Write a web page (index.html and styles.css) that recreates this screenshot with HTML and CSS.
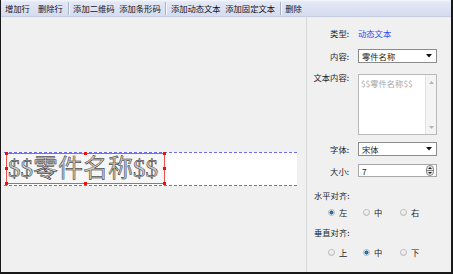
FILE: index.html
```html
<!DOCTYPE html>
<html>
<head>
<meta charset="utf-8">
<title>标签设计</title>
<link rel="stylesheet" href="styles.css">
</head>
<body>
<div class="app">
   <!-- Toolbar -->
   <div class="toolbar">
      <span class="tool first">增加行</span>
      <span class="tool">删除行</span>
      <span class="sep"></span>
      <span class="tool">添加二维码</span>
      <span class="tool">添加条形码</span>
      <span class="sep"></span>
      <span class="tool">添加动态文本</span>
      <span class="tool">添加固定文本</span>
      <span class="sep"></span>
      <span class="tool">删除</span>
   </div>

   <div class="main">
      <!-- Design canvas -->
      <div class="canvas">
         <div class="label-row">
            <div class="field">
               <span class="field-text">$$零件名称$$</span>
               <i class="h h-tl"></i><i class="h h-tm"></i><i class="h h-tr"></i>
               <i class="h h-ml"></i><i class="h h-mr"></i>
               <i class="h h-bl"></i><i class="h h-bm"></i><i class="h h-br"></i>
            </div>
         </div>
      </div>

      <!-- Property panel -->
      <div class="panel">
         <div class="row">
            <span class="lbl">类型:</span>
            <span class="link">动态文本</span>
         </div>
         <div class="row r-content">
            <span class="lbl">内容:</span>
            <div class="select">
               <span>零件名称</span>
               <svg class="arrow" width="6" height="4" viewBox="0 0 6 4"><path d="M0 0 H6 L3 3.5 Z" fill="#111"/></svg>
            </div>
         </div>
         <div class="row r-text">
            <span class="lbl lbl-top">文本内容:</span>
            <div class="textarea">
               <span class="ph">$$零件名称$$</span>
               <div class="sbar">
                  <svg width="5" height="3" viewBox="0 0 5 3"><path d="M0 3 L2.5 0 L5 3 Z" fill="#b4b4b4"/></svg>
                  <svg width="5" height="3" viewBox="0 0 5 3"><path d="M0 0 L2.5 3 L5 0 Z" fill="#b4b4b4"/></svg>
               </div>
            </div>
         </div>
         <div class="row r-font">
            <span class="lbl">字体:</span>
            <div class="select">
               <span>宋体</span>
               <svg class="arrow" width="6" height="4" viewBox="0 0 6 4"><path d="M0 0 H6 L3 3.5 Z" fill="#111"/></svg>
            </div>
         </div>
         <div class="row r-size">
            <span class="lbl">大小:</span>
            <div class="spin">
               <span>7</span>
               <svg class="spin-btn" width="8" height="11" viewBox="0 0 8 11">
                  <rect x="0.5" y="0.5" width="7" height="10" rx="3.5" fill="#e4e4e4" stroke="#8a8a8a"/>
                  <line x1="1" y1="5.5" x2="7" y2="5.5" stroke="#8a8a8a"/>
                  <path d="M2 4 L4 2 L6 4 Z" fill="#222"/>
                  <path d="M2 7 L4 9 L6 7 Z" fill="#222"/>
               </svg>
            </div>
         </div>

         <div class="section">水平对齐:</div>
         <div class="radios">
            <span class="radio"><i class="dot on"></i>左</span>
            <span class="radio"><i class="dot"></i>中</span>
            <span class="radio"><i class="dot"></i>右</span>
         </div>
         <div class="section s-v">垂直对齐:</div>
         <div class="radios">
            <span class="radio"><i class="dot"></i>上</span>
            <span class="radio"><i class="dot on"></i>中</span>
            <span class="radio"><i class="dot"></i>下</span>
         </div>
      </div>
   </div>
</div>
</body>
</html>
```

FILE: styles.css
```css
html,
body {
   margin: 0;
   padding: 0;
   background: #fff;
   font-family: "Noto Sans CJK SC", "DejaVu Sans", sans-serif;
   font-size: 8.3px;
   color: #1e1e1e;
}

.app {
   width: 453px;
   height: 274px;
   box-sizing: border-box;
   border-left: 1px solid #1a1a1a;
   border-right: 2px solid #1a1a1a;
   border-bottom: 2px solid #1a1a1a;
   display: flex;
   flex-direction: column;
   background: #f0f0f0;
}

/* toolbar */
.toolbar {
   height: 16px;
   display: flex;
   align-items: center;
   gap: 4.6px;
   padding-left: 4px;
   background: linear-gradient(#f6f8fc 0, #e3e8f5 2px, #d4dcef 100%);
   border-bottom: 1px solid #c6cde0;
}

.tool {
   line-height: 16px;
   white-space: nowrap;
   color: #14141e;
}

.tool.first {
   margin-right: 3.5px;
}

.sep {
   width: 1px;
   height: 13px;
   background: #aab3c8;
   box-shadow: 1px 0 0 #f4f6fb;
}

/* main area */
.main {
   flex: 1;
   display: flex;
}

.canvas {
   width: 306px;
   box-sizing: border-box;
   padding: 135px 0 0 3px;
   border-right: 1px solid #d8d8d8;
}

.label-row {
   width: 293px;
   height: 34px;
   box-sizing: border-box;
   padding-left: 2px;
   background: #fff;
   border-top: 1px dashed #6a6af2;
   border-bottom: 1px dashed #6a6af2;
}

.field {
   position: relative;
   width: 159px;
   height: 31px;
   box-sizing: border-box;
   border: 1px solid #f05050;
   background: #f6f6f6;
}

.field-text {
   display: block;
   padding-left: 1px;
   font-family: "Liberation Serif", "Noto Sans CJK SC", serif;
   font-size: 25px;
   line-height: 29px;
   white-space: nowrap;
   color: #c8c8c8;
   -webkit-text-stroke: 0.45px #161616;
}

.h {
   position: absolute;
   width: 3px;
   height: 3px;
   background: #e81010;
}

.h-tl { left: -2px; top: -2px; }
.h-tm { left: 77px; top: -2px; }
.h-tr { right: -2px; top: -2px; }
.h-ml { left: -2px; top: 13px; }
.h-mr { right: -2px; top: 13px; }
.h-bl { left: -2px; bottom: -2px; }
.h-bm { left: 77px; bottom: -2px; }
.h-br { right: -2px; bottom: -2px; }

/* property panel */
.panel {
   flex: 1;
   padding-top: 9px;
}

.row {
   display: flex;
   align-items: center;
   height: 14px;
}

.lbl {
   width: 42px;
   margin-right: 9px;
   text-align: right;
   white-space: nowrap;
}

.lbl-top {
   align-self: flex-start;
   line-height: 14px;
   margin-top: -4px;
}

.link {
   color: #2f4ff0;
}

.r-content { margin-top: 9px; }
.r-text { margin-top: 11px; height: 61px; align-items: flex-start; }
.r-font { margin-top: 7px; }
.r-size { margin-top: 8px; height: 13px; }

.select,
.spin {
   width: 79px;
   height: 14px;
   box-sizing: border-box;
   display: flex;
   align-items: center;
   justify-content: space-between;
   padding: 0 4px 0 3px;
   background: #fff;
   border: 1px solid #8c8c8c;
}

.spin {
   height: 13px;
   border-color: #a8a8a8;
   padding-right: 2px;
}

.textarea {
   width: 79px;
   height: 61px;
   box-sizing: border-box;
   display: flex;
   justify-content: space-between;
   background: #fff;
   border: 1px solid #b9b9b9;
}

.ph {
   padding: 2px 0 0 2px;
   color: #a8a8a8;
   white-space: nowrap;
}

.sbar {
   width: 10px;
   display: flex;
   flex-direction: column;
   justify-content: space-between;
   align-items: center;
   padding: 6px 0 5px;
   background: #f4f4f4;
   border-left: 1px solid #e2e2e2;
}

.section {
   margin-top: 12px;
   padding-left: 7px;
   line-height: 12px;
}

.s-v {
   margin-top: 8px;
}

.radios {
   display: grid;
   grid-template-columns: 35px 37px 37px;
   padding-left: 21px;
   margin-top: 5px;
   line-height: 12px;
}

.s-v + .radios {
   margin-top: 8px;
}

.radio {
   display: flex;
   align-items: center;
   gap: 4px;
}

.dot {
   width: 7px;
   height: 7px;
   box-sizing: border-box;
   border-radius: 50%;
   border: 1px solid #b8b8b8;
   background: linear-gradient(#f8f8f8, #e2e2e2);
}

.dot.on {
   background: radial-gradient(circle, #2a8ad6 0, #155a9c 1.8px, #e8e8e8 2.2px);
}
```
